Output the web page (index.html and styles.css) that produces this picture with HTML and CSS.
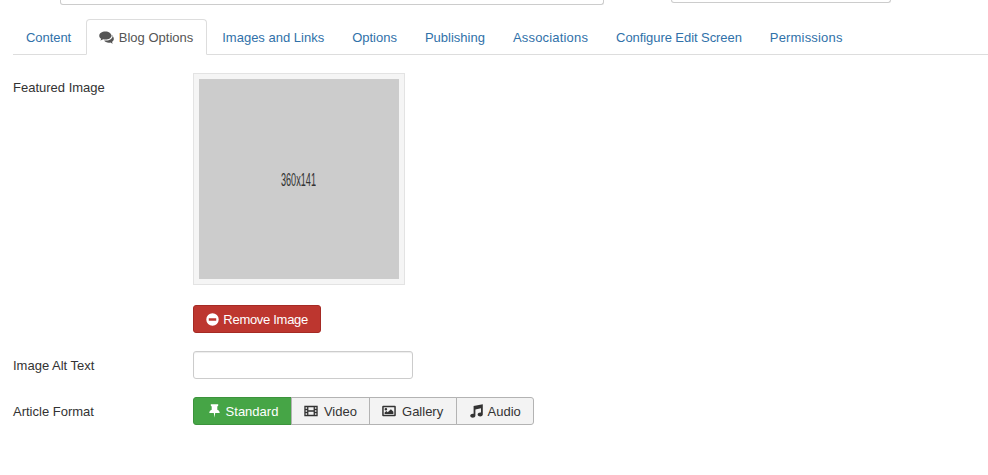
FILE: index.html
```html
<!DOCTYPE html>
<html lang="en">
<head>
<meta charset="utf-8">
<title>Blog Options</title>
<link rel="stylesheet" href="styles.css">
</head>
<body>
<div class="top-fields">
  <div class="top-field top-field-title"></div>
  <div class="top-field top-field-alias"></div>
</div>
<ul class="tabs">
  <li class="tab tab-content"><a href="#">Content</a></li>
  <li class="tab active"><a href="#"><svg class="icon icon-comments" viewBox="0 0 16 14"><path d="M6.800 0.600C3 0.600 0.200 2.600 0.200 5.100c0 1.300 0.800 2.500 2.100 3.300-0.200 0.700-0.600 1.300-1.100 1.800 1.200-0.100 2.300-0.600 3.200-1.300 0.800 0.200 1.600 0.300 2.400 0.300 3.700 0 6.600-1.900 6.600-4.100S10.500 0.600 6.800 0.600z"/><path d="M14.300 4.400c0.200 0.300 0.200 0.600 0.200 1 0 2.600-2.900 4.900-7 4.900-0.800 0-1.500 0-2-0.100 0.900 1.400 2.700 2.400 5 2.400 0.600 0 1.200-0.100 1.700-0.200 0.800 0.600 1.800 1 2.800 1.100-0.500-0.500-0.900-1.100-1.100-1.700 1.300-0.800 2-2 2-3.200 0-1.700-1-3.200-2.600-4.200z"/></svg> Blog Options</a></li>
  <li class="tab"><a href="#">Images and Links</a></li>
  <li class="tab"><a href="#">Options</a></li>
  <li class="tab"><a href="#">Publishing</a></li>
  <li class="tab tab-wide"><a href="#">Associations</a></li>
  <li class="tab tab-config"><a href="#">Configure Edit Screen</a></li>
  <li class="tab tab-wide"><a href="#">Permissions</a></li>
</ul>
<form class="form">
  <div class="row row-image">
    <div class="label">Featured Image</div>
    <div class="control">
      <div class="thumb"><div class="placeholder"><span class="placeholder-text">360x141</span></div></div>
      <button type="button" class="btn-remove"><svg class="icon icon-minus" viewBox="0 0 14 14"><path fill-rule="evenodd" d="M7 0.300a6.700 6.700 0 1 0 0 13.400 6.700 6.700 0 0 0 0-13.400zM3 5.700h8v2.600H3z"/></svg> Remove Image</button>
    </div>
  </div>
  <div class="row row-alt">
    <div class="label">Image Alt Text</div>
    <div class="control"><input class="text-input" type="text"></div>
  </div>
  <div class="row row-format">
    <div class="label">Article Format</div>
    <div class="control">
      <div class="btn-group">
        <button type="button" class="seg seg-active"><svg class="icon icon-pin" viewBox="0 0 11 14"><path d="M1.800 0.300h7.400v1.500L8.300 2.500v3.300C9.800 6.500 10.700 7.600 10.700 9H6.200L5.500 13.800 4.800 9H0.300c0-1.400 0.900-2.500 2.400-3.200V2.500L1.800 1.800z"/></svg> Standard</button>
        <button type="button" class="seg seg-video"><svg class="icon icon-film" viewBox="0 0 14 12"><path fill-rule="evenodd" d="M0.300 0.800h13.400v10.400H0.300zM1.600 2.200v1.500h1.500V2.200zM1.600 5.200v1.600h1.500V5.200zM1.600 8.300v1.500h1.500V8.300zM10.900 2.200v1.500h1.500V2.200zM10.900 5.200v1.600h1.500V5.200zM10.900 8.300v1.500h1.500V8.300zM4.400 2.200v3h5.200v-3zM4.400 6.800v3h5.200v-3z"/></svg> Video</button>
        <button type="button" class="seg seg-gallery"><svg class="icon icon-picture" viewBox="0 0 14 12"><path fill-rule="evenodd" d="M1.200 0.700h11.600a1 1 0 0 1 1 1v8.600a1 1 0 0 1-1 1H1.200a1 1 0 0 1-1-1V1.700a1 1 0 0 1 1-1zM1.700 2.200v7.600h10.600V2.200zM3.900 3a1.300 1.300 0 1 1 0 2.600 1.300 1.300 0 0 1 0-2.600zM2.600 9V7.600l1.800-1.500 1.300 1.100 3.200-3 2.500 2.500V9z"/></svg> Gallery</button>
        <button type="button" class="seg seg-audio"><svg class="icon icon-music" viewBox="0 0 13 14"><path d="M12.800 0.300v10.200c0 1.300-1.400 2-2.600 2s-2.600-0.700-2.600-2 1.400-2 2.600-2c0.300 0 0.600 0 0.800 0.100V4.300L5.400 5.500v6.200c0 1.300-1.400 2-2.600 2s-2.600-0.700-2.600-2 1.400-2 2.600-2c0.300 0 0.600 0 0.800 0.100V2.100z"/></svg> Audio</button>
      </div>
    </div>
  </div>
</form>
</body>
</html>
```
FILE: styles.css
```css
* { box-sizing: border-box; }
html, body { margin: 0; padding: 0; }
body {
  background: #fff;
  color: #333;
  font-family: "Liberation Sans", Arial, sans-serif;
  font-size: 13px;
  line-height: 18px;
  width: 988px;
  height: 475px;
  overflow: hidden;
}
.top-fields { display: flex; height: 19px; align-items: flex-start; padding-left: 60px; }
.top-field {
  border: 1px solid #ccc;
  border-top: 0;
  border-radius: 0 0 3px 3px;
  background: #fff;
}
.top-field-title { width: 544px; height: 5px; }
.top-field-alias { width: 220px; height: 3px; margin-left: 67px; }
.tabs {
  display: flex;
  list-style: none;
  margin: 0 0 0 13px;
  padding: 0;
  border-bottom: 1px solid #ddd;
  height: 36px;
}
.tab { margin-right: 2px; height: 36px; }
.tab-content { letter-spacing: -.05px; }
.tab-wide { letter-spacing: .18px; }
.tab-config { letter-spacing: -.07px; }
.tab a {
  display: block;
  padding: 9px 12px 7px;
  border: 1px solid transparent;
  border-radius: 4px 4px 0 0;
  color: #3071a9;
  text-decoration: none;
  height: 36px;
}
.tab.active a {
  color: #555;
  background: #fff;
  border-color: #ddd #ddd #fff;
  padding-right: 13px;
}
.icon { display: inline-block; fill: currentColor; vertical-align: -2px; }
.icon-comments { width: 15px; height: 13px; margin-right: 1px; }
.icon-minus { width: 13px; height: 13px; margin-right: 1px; }
.icon-pin { width: 11px; height: 14px; margin-right: 2px; }
.icon-film { width: 14px; height: 12px; vertical-align: -1px; margin-right: 2px; }
.icon-picture { width: 14px; height: 12px; vertical-align: -1px; margin-right: 2px; }
.icon-music { width: 13px; height: 14px; margin-right: 2px; }
.form { padding: 18px 0 0 13px; }
.row { display: flex; }
.label { width: 180px; flex: none; padding-top: 6px; }
.row-alt { margin-top: 18px; }
.row-format { margin-top: 18px; }
.thumb {
  width: 212px;
  height: 212px;
  padding: 5px;
  border: 1px solid #e3e3e3;
  background: #f5f5f5;
}
.placeholder {
  width: 200px;
  height: 200px;
  background: #ccc;
  display: flex;
  align-items: center;
  justify-content: center;
  padding: 2px 2px 0 0;
}
.placeholder-text {
  display: inline-block;
  font-size: 19px;
  color: #333;
  transform: scaleX(0.48);
}
.btn-remove {
  display: block;
  margin-top: 20px;
  width: 128px;
  height: 28px;
  padding: 2px 0 0;
  background: #bd362f;
  border: 1px solid #a52a24;
  border-radius: 3px;
  color: #fff;
  font: inherit;
  letter-spacing: -.3px;
  text-align: center;
}
.text-input {
  display: block;
  width: 220px;
  height: 28px;
  margin: 0;
  border: 1px solid #ccc;
  border-radius: 3px;
  background: #fff;
  box-shadow: inset 0 1px 1px rgba(0,0,0,.075);
}
.btn-group { display: flex; height: 28px; }
.seg {
  height: 28px;
  padding: 2px 13px 0 12px;
  margin-left: -1px;
  background: #f3f3f3;
  border: 1px solid #b3b3b3;
  color: #333;
  font: inherit;
  white-space: nowrap;
}
.seg-video { padding: 2px 12.5px 0 12.5px; }
.seg-gallery { padding-right: 12.5px; }
.seg-audio { padding: 2px 12.5px 0 13px; }
.seg:first-child { margin-left: 0; border-radius: 3px 0 0 3px; }
.seg:last-child { border-radius: 0 3px 3px 0; }
.seg-active {
  background: #46a546;
  border-color: #3c933c;
  color: #fff;
  padding: 2px 12.4px 0 15px;
}
```
